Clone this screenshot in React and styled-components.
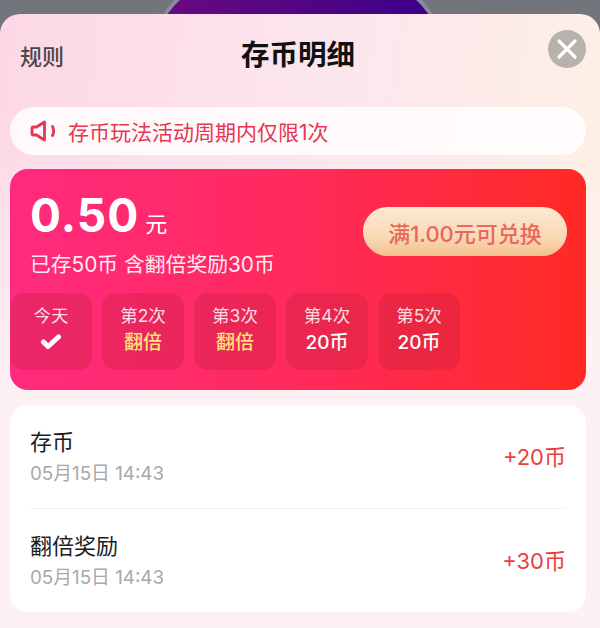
import React from 'react';
import styled, { createGlobalStyle } from 'styled-components';

const GlobalStyle = createGlobalStyle`
  html, body {
    margin: 0;
    padding: 0;
    background: #72757c;
  }
  * {
    box-sizing: border-box;
  }
`;

const Stage = styled.div`
  position: relative;
  width: 600px;
  height: 628px;
  padding-top: 14px;
  overflow: hidden;
  background: #72757c;
  font-family: Inter, 'Noto Sans CJK SC', sans-serif;
`;

const Dome = styled.div`
  position: absolute;
  top: -39px;
  left: 158px;
  width: 280px;
  height: 168px;
  border-radius: 50%;
  background: linear-gradient(90deg, #6a0a80, #3a0088);
  box-shadow: 0 -3px 0 2px #8d8aa0;
`;

const Sheet = styled.div`
  position: relative;
  height: 614px;
  padding: 0 14px 0 10px;
  border-radius: 20px 20px 0 0;
  background:
    linear-gradient(180deg, rgba(253, 241, 244, 0) 20%, #fdf1f4 62%),
    linear-gradient(98deg, #fcd8e6 0%, #fce6ee 50%, #fdf2e3 100%);
`;

const Header = styled.header`
  display: flex;
  align-items: center;
  height: 93px;
  padding: 0 0 13px 10px;
`;

const RuleLink = styled.span`
  width: 44px;
  margin-top: 2px;
  font-size: 22px;
  font-weight: 500;
  color: #4c4749;
`;

const Title = styled.h1`
  flex: 1;
  margin: 2px 0 0;
  padding-right: 54px;
  text-align: center;
  font-size: 28.5px;
  line-height: 36px;
  font-weight: 700;
  color: #111;
`;

const CloseButton = styled.button`
  position: absolute;
  top: 16px;
  right: 14px;
  width: 38px;
  height: 38px;
  display: flex;
  align-items: center;
  justify-content: center;
  padding: 0;
  border: none;
  border-radius: 50%;
  background: #b9b2ac;
`;

const Notice = styled.div`
  display: flex;
  align-items: center;
  gap: 12px;
  height: 48px;
  padding-left: 20px;
  border-radius: 24px;
  background: rgba(255, 255, 255, 0.82);
  font-size: 21px;
  color: #e63650;
`;

const BalanceCard = styled.section`
  height: 221px;
  margin-top: 14px;
  padding-top: 18px;
  border-radius: 18px;
  background: linear-gradient(90deg, #ff2a7e 0%, #ff2a5c 50%, #ff2a24 100%);
  color: #fff;
`;

const BalanceTop = styled.div`
  display: flex;
  justify-content: space-between;
  padding: 0 19px 0 20px;
`;

const Amount = styled.div`
  display: flex;
  align-items: baseline;
  gap: 6px;
  height: 56px;
  line-height: 56px;
`;

const AmountValue = styled.span`
  font-size: 46px;
  font-weight: 700;
  letter-spacing: 1px;
`;

const AmountUnit = styled.span`
  font-size: 22px;
`;

const Saved = styled.div`
  margin-top: 8px;
  font-size: 20.8px;
  line-height: 28px;
  color: rgba(255, 255, 255, 0.92);
`;

const RedeemButton = styled.button`
  width: 204px;
  height: 49px;
  margin-top: 20px;
  padding: 0;
  border: none;
  border-radius: 25px;
  background: linear-gradient(180deg, #fce8d2 0%, #f9dab6 60%, #f4bf8f 100%);
  font-family: inherit;
  font-size: 22px;
  font-weight: 500;
  color: #e8685c;
`;

const Steps = styled.div`
  display: flex;
  gap: 10px;
  margin-top: 14px;
`;

const Step = styled.div`
  display: flex;
  flex-direction: column;
  align-items: center;
  width: 82px;
  height: 77px;
  padding-top: 11px;
  border-radius: 14px;
  background: rgba(190, 30, 60, 0.3);
`;

const StepLabel = styled.span`
  font-size: 17.5px;
  line-height: 24px;
  color: rgba(255, 255, 255, 0.85);
`;

const StepValue = styled.span`
  margin-top: 2px;
  font-size: 19px;
  line-height: 26px;
  font-weight: 500;
  color: ${(p) => (p.$gold ? '#ffe27a' : '#fff')};
`;

const HistoryCard = styled.section`
  height: 207px;
  margin-top: 15px;
  padding: 0 20px;
  border-radius: 18px;
  background: #fff;
`;

const HistoryRow = styled.div`
  display: flex;
  align-items: center;
  justify-content: space-between;
  height: ${(p) => (p.$last ? '103px' : '104px')};
  border-bottom: ${(p) => (p.$last ? 'none' : '1px solid #f6f1f2')};
`;

const RowName = styled.div`
  font-size: 22px;
  line-height: 30px;
  color: #1c1c1c;
`;

const RowDate = styled.div`
  margin-top: 4px;
  font-size: 18.8px;
  line-height: 26px;
  color: #a9a9a9;
`;

const RowCoins = styled.div`
  padding-bottom: 4px;
  font-size: 22px;
  color: #e8403f;
`;

const steps = [
  { label: '今天', done: true },
  { label: '第2次', value: '翻倍', gold: true },
  { label: '第3次', value: '翻倍', gold: true },
  { label: '第4次', value: '20币' },
  { label: '第5次', value: '20币' },
];

const records = [
  { name: '存币', date: '05月15日 14:43', coins: '+20币' },
  { name: '翻倍奖励', date: '05月15日 14:43', coins: '+30币' },
];

const SpeakerIcon = () => (
  <svg width="26" height="26" viewBox="0 0 26 26" fill="none" stroke="#e63650" strokeWidth="2.8" strokeLinejoin="round" strokeLinecap="round">
    <path d="M2 10.5c0-.8.6-1.500 1.500-1.500H6.500L14.500 4v18L6.500 17H3.500C2.600 17 2 16.300 2 15.500z" />
    <path d="M22.500 8.500c1.500 2.800 1.500 6.200 0 9" />
  </svg>
);

const CloseIcon = () => (
  <svg width="22" height="22" viewBox="0 0 22 22" stroke="#fff" strokeWidth="3.2" strokeLinecap="round">
    <path d="M3 3l16 16M19 3L3 19" />
  </svg>
);

const CheckIcon = () => (
  <svg width="22" height="26" viewBox="0 0 22 26" fill="none" stroke="#fff" strokeWidth="5" strokeLinecap="round" strokeLinejoin="round">
    <path d="M3.500 14l4.500 4.500L18.500 9" />
  </svg>
);

const App = () => (
  <Stage>
    <GlobalStyle />
    <Dome />
    <Sheet>
      <Header>
        <RuleLink>规则</RuleLink>
        <Title>存币明细</Title>
      </Header>
      <CloseButton aria-label="关闭">
        <CloseIcon />
      </CloseButton>

      <Notice>
        <SpeakerIcon />
        存币玩法活动周期内仅限1次
      </Notice>

      <BalanceCard>
        <BalanceTop>
          <div>
            <Amount>
              <AmountValue>0.50</AmountValue>
              <AmountUnit>元</AmountUnit>
            </Amount>
            <Saved>已存50币 含翻倍奖励30币</Saved>
          </div>
          <RedeemButton>满1.00元可兑换</RedeemButton>
        </BalanceTop>
        <Steps>
          {steps.map((step) => (
            <Step key={step.label}>
              <StepLabel>{step.label}</StepLabel>
              {step.done ? (
                <CheckIcon />
              ) : (
                <StepValue $gold={step.gold}>{step.value}</StepValue>
              )}
            </Step>
          ))}
        </Steps>
      </BalanceCard>

      <HistoryCard>
        {records.map((record, index) => (
          <HistoryRow key={record.name} $last={index === records.length - 1}>
            <div>
              <RowName>{record.name}</RowName>
              <RowDate>{record.date}</RowDate>
            </div>
            <RowCoins>{record.coins}</RowCoins>
          </HistoryRow>
        ))}
      </HistoryCard>
    </Sheet>
  </Stage>
);

export default App;
